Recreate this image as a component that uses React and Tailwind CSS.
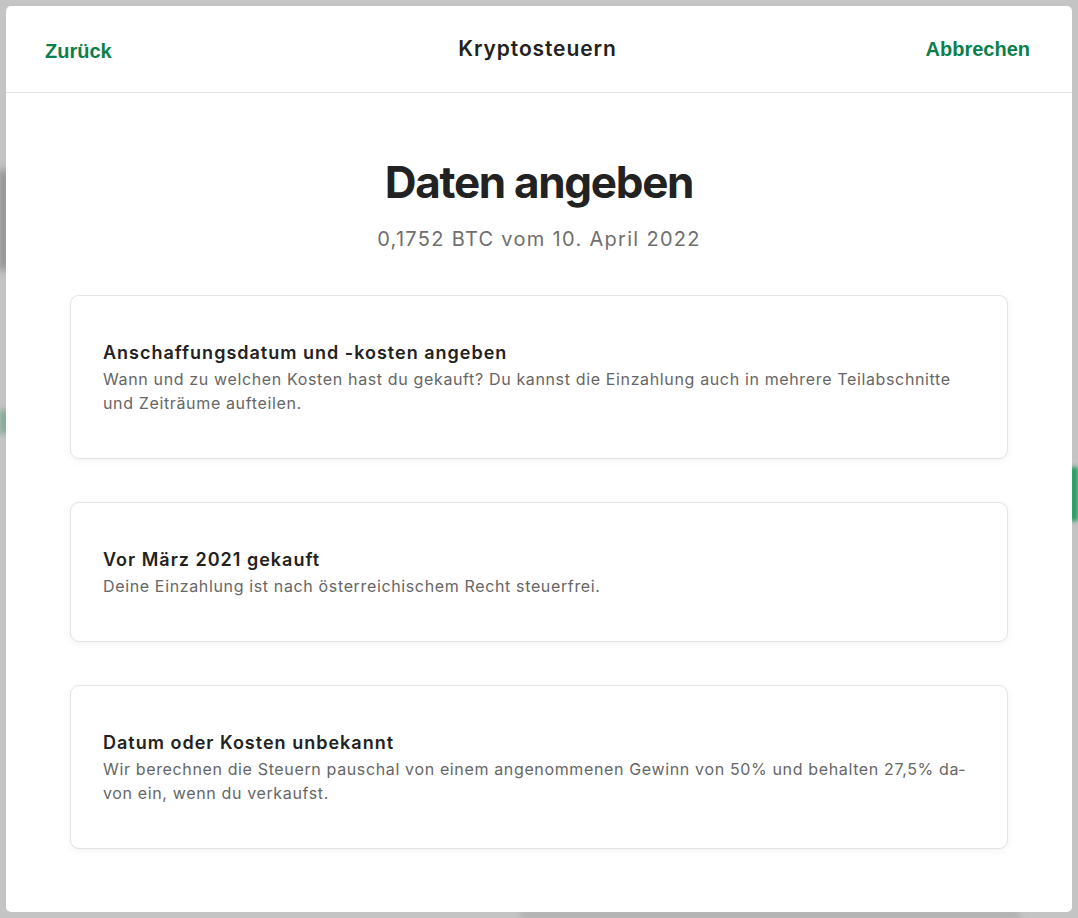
import React from 'react';

const options = [
  {
    title: 'Anschaffungsdatum und -kosten angeben',
    text: 'Wann und zu welchen Kosten hast du gekauft? Du kannst die Einzahlung auch in mehrere Teilabschnitte und Zeiträume aufteilen.',
  },
  {
    title: 'Vor März 2021 gekauft',
    text: 'Deine Einzahlung ist nach österreichischem Recht steuerfrei.',
  },
  {
    title: 'Datum oder Kosten unbekannt',
    text: 'Wir berechnen die Steuern pauschal von einem angenommenen Gewinn von 50% und behalten 27,5% da\u00ADvon ein, wenn du verkaufst.',
  },
];

const OptionCard = ({ title, text }) => (
  <button className="w-full text-left bg-white border border-[#e3e3e3] rounded-[9px] px-8 py-[43px] shadow-[0_2px_8px_rgba(0,0,0,0.05)]">
    <div className="text-[18px] leading-[28px] font-semibold text-[#222] tracking-[1px]">{title}</div>
    <p className="text-[16px] leading-[24px] text-[#666] tracking-[0.64px]">{text}</p>
  </button>
);

export default function App() {
  return (
    <div
      lang="de"
      className="relative min-h-[918px] bg-[#c4c4c4] p-[6px] overflow-hidden font-['Inter','Noto_Sans',sans-serif]"
    >
      {/* verschwommener Hintergrund */}
      <div className="absolute inset-0 pointer-events-none">
        <div className="absolute left-0 top-[170px] w-[8px] h-[100px] bg-[#555] blur-[4px] opacity-60" />
        <div className="absolute left-0 top-[410px] w-[8px] h-[24px] bg-[#2e8a5c] blur-[3px] opacity-50" />
        <div className="absolute right-0 top-[467px] w-[8px] h-[54px] bg-[#1f9d5e] blur-[2px]" />
        <div className="absolute bottom-0 left-[520px] w-[500px] h-[6px] bg-[#999] blur-[3px] opacity-60" />
      </div>

      <div className="relative bg-white rounded-[5px] h-[906px] flex flex-col">
        <header className="h-[87px] border-b border-[#e2e2e2] grid grid-cols-[1fr_auto_1fr] items-center pl-[39px] pr-[42px]">
          <button className="justify-self-start text-[20px] font-bold text-[#0b7f4c] font-['Liberation_Sans',Arial,sans-serif] mt-[3px]">
            Zurück
          </button>
          <h1 className="text-[21px] font-semibold text-[#222] tracking-[0.9px]">Kryptosteuern</h1>
          <button className="justify-self-end text-[20px] font-bold text-[#0b7f4c] font-['Liberation_Sans',Arial,sans-serif]">
            Abbrechen
          </button>
        </header>

        <main className="px-16 pt-[61px]">
          <div className="text-center">
            <h2 className="text-[44px] leading-[56px] font-bold text-[#222] tracking-[-1.3px]">Daten angeben</h2>
            <p className="mt-[14px] text-[20px] leading-[30px] text-[#6f6f6f] tracking-[1.3px]">0,1752 BTC vom 10. April 2022</p>
          </div>

          <div className="mt-[41px] flex flex-col gap-[43px]">
            {options.map(o => (
              <OptionCard key={o.title} title={o.title} text={o.text} />
            ))}
          </div>
        </main>
      </div>
    </div>
  );
}
